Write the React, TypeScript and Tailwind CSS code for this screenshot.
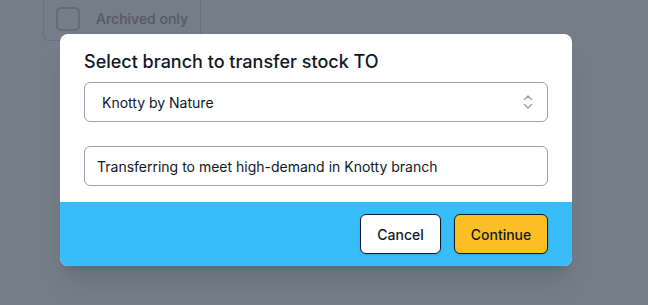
import React from "react";

export default function App() {
  return (
    <div
      className="relative w-[648px] h-[305px] overflow-hidden bg-[#757d88]"
      style={{ fontFamily: "Inter, 'Noto Sans', sans-serif" }}
    >
      <div className="absolute left-[43px] top-[-10px] w-[158px] h-[51px] rounded-md border border-[#69707a] flex items-end pb-[9px] pl-[12px] gap-[16px]">
        <div className="w-[24px] h-[24px] rounded-[5px] border-2 border-[#656c76]" />
        <span className="text-[14px] font-medium text-[#535a64] leading-[24px]">Archived only</span>
      </div>
      <div className="absolute left-[60px] top-[34px] w-[512px] rounded-lg bg-white overflow-hidden shadow-xl">
        <div className="px-6 pt-[14px] pb-4">
          <h2 className="text-[18px] leading-7 font-medium text-[#111827]">
            Select branch to transfer stock TO
          </h2>
          <div className="mt-[6px] h-[40px] rounded-md border border-[#9ca3af] flex items-center justify-between pl-[17px] pr-[14px]">
            <span className="text-[14px] text-[#111827]">Knotty by Nature</span>
            <svg width="10" height="16" viewBox="0 0 10 16" fill="none" stroke="#9ca3af" strokeWidth="1.5" strokeLinecap="round" strokeLinejoin="round">
              <path d="M1.5 5.5 L5 2 L8.5 5.5" />
              <path d="M1.5 10.5 L5 14 L8.5 10.5" />
            </svg>
          </div>
          <div className="mt-6 h-[40px] rounded-md border border-[#9ca3af] flex items-center pl-[12px]">
            <span className="text-[14px] text-[#111827]">Transferring to meet high-demand in Knotty branch</span>
          </div>
        </div>
        <div className="bg-[#38bdf8] px-6 py-3 flex justify-end gap-[13px]">
          <button className="h-[40px] w-[81px] rounded-md border border-[#111827] bg-white text-[14px] font-medium text-[#111827] shadow-sm">
            Cancel
          </button>
          <button className="h-[40px] w-[94px] rounded-md border border-[#111827] bg-[#fbbf24] text-[14px] font-medium text-[#111827] shadow-sm">
            Continue
          </button>
        </div>
      </div>
    </div>
  );
}
